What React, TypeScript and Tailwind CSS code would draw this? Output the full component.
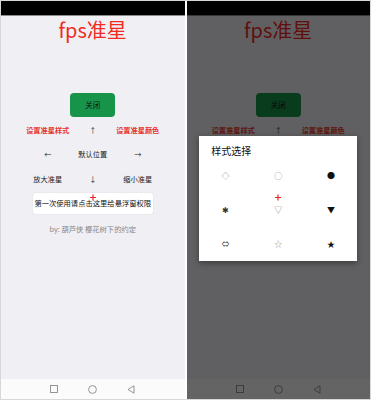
import type { ReactNode } from 'react';

const cjk = { fontFamily: '"Noto Sans CJK SC", "Noto Sans", sans-serif' };

function Crosshair() {
    // floating crosshair drawn by the app over everything
    return (
        <svg
            className="absolute left-1/2 top-[193px] -translate-x-1/2 z-30"
            width="7"
            height="7"
            viewBox="0 0 7 7"
        >
            <path d="M3.5 0.5v6M0.5 3.5h6" stroke="#f02424" strokeWidth="1.2" />
        </svg>
    );
}

function NavBar() {
    return (
        <div className="h-[20px] bg-[#fbfbfb] flex items-center justify-center gap-[30px]">
            <svg width="8" height="8" viewBox="0 0 8 8">
                <rect x="0.5" y="0.5" width="7" height="7" fill="none" stroke="#8a8a8a" strokeWidth="0.9" />
            </svg>
            <svg width="9" height="9" viewBox="0 0 9 9">
                <circle cx="4.5" cy="4.5" r="3.9" fill="none" stroke="#8a8a8a" strokeWidth="0.9" />
            </svg>
            <svg width="8" height="9" viewBox="0 0 8 9">
                <path d="M7 0.8L1 4.5L7 8.2Z" fill="none" stroke="#8a8a8a" strokeWidth="0.9" strokeLinejoin="round" />
            </svg>
        </div>
    );
}

function Row({ left, mid, right, red, className }: { left: ReactNode; mid: ReactNode; right: ReactNode; red?: boolean; className: string }) {
    const side = red ? 'text-[#e8332c] font-bold' : 'text-[#222]';
    return (
        <div className={`grid grid-cols-[45px_45px_45px] justify-center text-center text-[7.2px] leading-[10px] ${className}`}>
            <span className={`whitespace-nowrap ${side}`}>{left}</span>
            <span className="text-[#222]">{mid}</span>
            <span className={`whitespace-nowrap ${side}`}>{right}</span>
        </div>
    );
}

function Screen() {
    return (
        <div className="flex-1 flex flex-col bg-[#efeff4]">
            <h1 className="mt-[4px] text-center text-[20px] leading-[20px] text-[#f22a22]">fps准星</h1>
            <button className="mx-auto mt-[53px] w-[45px] h-[24px] rounded-[4px] bg-[#17934a] text-[7.5px] text-[#111]">
                关闭
            </button>
            <Row className="mt-[8px]" red left="设置准星样式" mid="↑" right="设置准星颜色" />
            <Row className="mt-[14px]" left="←" mid="默认位置" right="→" />
            <Row className="mt-[15px]" left="放大准星" mid="↓" right="缩小准星" />
            <div className="mx-auto mt-[9px] w-[120px] h-[21px] bg-white rounded-[2px] shadow-[0_0_1px_rgba(0,0,0,0.25)] flex items-center justify-center text-[7.3px] text-[#111] whitespace-nowrap">
                第一次使用请点击这里给悬浮窗权限
            </div>
            <p className="mt-[10px] text-center text-[7.3px] leading-[10px] text-[#888]">by: 葫芦侠 樱花树下的约定</p>
        </div>
    );
}

const styles: { s: string; c: string }[] = [
    { s: '◇', c: 'text-[#888]' },
    { s: '○', c: 'text-[#888]' },
    { s: '●', c: 'text-[#111]' },
    { s: '✱', c: 'text-[#333]' },
    { s: '▽', c: 'text-[#888]' },
    { s: '▼', c: 'text-[#111]' },
    { s: '⇔', c: 'text-[#444]' },
    { s: '☆', c: 'text-[#999]' },
    { s: '★', c: 'text-[#111]' },
];

function Phone({ dialog }: { dialog?: boolean }) {
    return (
        <div className="relative w-[184px] h-[398px] flex flex-col overflow-hidden" style={cjk}>
            <div className="h-[14px] bg-black" />
            <div className="h-[1px] bg-[#8c8c8c]" />
            <Screen />
            <NavBar />
            {dialog && (
                <div className="absolute inset-0 z-10 bg-black/60 flex items-center justify-center">
                    <div className="w-[158px] h-[125px] bg-white shadow-[0_2px_6px_rgba(0,0,0,0.4)] mt-[-4px]">
                        <div className="pl-[12px] pt-[9px] text-[10px] leading-[12px] text-[#111]">样式选择</div>
                        <div className="mt-[2px] grid grid-cols-3 grid-rows-[34px_34px_34px]">
                            {styles.map((st, i) => (
                                <div key={i} className={`flex items-center justify-center text-[8px] ${st.c}`}>
                                    {st.s}
                                </div>
                            ))}
                        </div>
                    </div>
                </div>
            )}
            <Crosshair />
        </div>
    );
}

export default function App() {
    return (
        <div className="w-[371px] h-[400px] bg-white border border-[#d8d8d8] flex gap-[2px]">
            <Phone />
            <Phone dialog />
        </div>
    );
}
